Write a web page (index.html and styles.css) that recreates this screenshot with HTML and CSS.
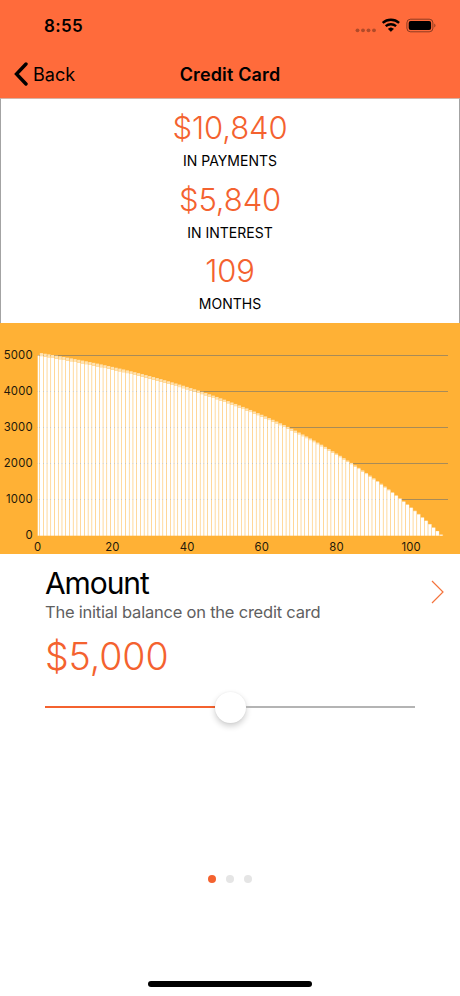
FILE: index.html
```html
<!DOCTYPE html>
<html lang="en">
<head>
    <meta charset="UTF-8">
    <title>Credit Card</title>
    <link rel="stylesheet" href="styles.css">
</head>
<body>
    <header class="header">
        <div class="status-bar">
            <span class="time">8:55</span>
            <svg class="status-icons" width="82" height="16" viewBox="0 0 82 16">
                <g class="signal">
                    <circle cx="3.5" cy="12.3" r="1.9"/>
                    <circle cx="9" cy="12.3" r="1.9"/>
                    <circle cx="14.5" cy="12.3" r="1.9"/>
                    <circle cx="20" cy="12.3" r="1.9"/>
                </g>
                <g class="wifi">
                    <path d="M28.7 4.9a12.4 12.4 0 0 1 16.4 0"/>
                    <path d="M31.7 8.2a8 8 0 0 1 10.4 0"/>
                    <path class="wifi-dot" d="M34.3 10.9a4.1 4.1 0 0 1 5.2 0L36.9 13.4z"/>
                </g>
                <rect class="battery-case" x="52.9" y="1.2" width="26" height="12.6" rx="3.6"/>
                <rect x="54.7" y="3" width="22.4" height="9" rx="2"/>
                <path class="battery-tip" d="M80 5.5q1.6.5 1.6 2t-1.6 2z"/>
            </svg>
        </div>
        <nav class="nav-bar">
            <a class="back">
                <svg width="14" height="24" viewBox="0 0 14 24"><path d="M12 2L2.5 12L12 22"/></svg>
                <span>Back</span>
            </a>
            <h1>Credit Card</h1>
        </nav>
    </header>

    <section class="summary">
        <div class="value">$10,840</div>
        <div class="label">IN PAYMENTS</div>
        <div class="value">$5,840</div>
        <div class="label">IN INTEREST</div>
        <div class="value">109</div>
        <div class="label">MONTHS</div>
    </section>

    <svg class="chart" id="chart" width="460" height="231" viewBox="0 0 460 231"></svg>

    <main class="card">
        <div class="card-head">
            <div>
                <h2>Amount</h2>
                <p>The initial balance on the credit card</p>
            </div>
            <svg class="next" width="14" height="24" viewBox="0 0 14 24"><path d="M1 1L12 12L1 23"/></svg>
        </div>
        <div class="amount">$5,000</div>
        <div class="slider">
            <div class="track filled"></div>
            <div class="thumb"></div>
            <div class="track"></div>
        </div>
    </main>

    <footer class="footer">
        <div class="dots">
            <span class="dot active"></span>
            <span class="dot"></span>
            <span class="dot"></span>
        </div>
        <div class="home-indicator"></div>
    </footer>

    <script src="chart.js"></script>
</body>
</html>
```
FILE: styles.css
```css
* {
    box-sizing: border-box;
}
body {
    margin: 0;
    height: 996px;
    display: flex;
    flex-direction: column;
    font-family: Inter, "Liberation Sans", sans-serif;
    background: #fff;
    color: #000;
    overflow: hidden;
}
h1, h2, p {
    margin: 0;
    font-weight: 400;
}
.header {
    height: 98px;
    background: #ff6b3b;
}
.status-bar {
    height: 50px;
    padding: 2px 24px 0 44px;
    display: flex;
    justify-content: space-between;
    align-items: center;
}
.time {
    font-size: 17px;
    font-weight: 600;
    line-height: 20px;
    letter-spacing: 0.3px;
}
.signal, .battery-tip {
    opacity: 0.3;
}
.wifi {
    fill: none;
    stroke: #000;
    stroke-width: 2.4;
}
.wifi-dot {
    fill: #000;
    stroke-width: 0.6;
}
.battery-case {
    fill: none;
    stroke: #000;
    stroke-opacity: 0.45;
}
.nav-bar {
    height: 48px;
    padding: 0 14px;
    display: grid;
    grid-template-columns: 1fr auto 1fr;
    align-items: center;
}
.back {
    display: flex;
    align-items: center;
    gap: 5px;
    font-size: 18px;
    letter-spacing: 0;
}
.back path {
    fill: none;
    stroke: #000;
    stroke-width: 3.4;
    stroke-linecap: round;
}
.nav-bar h1 {
    font-size: 18px;
    font-weight: 600;
    letter-spacing: 0.15px;
}
.summary {
    height: 225px;
    padding-top: 9px;
    border: 1px solid #a3a3a3;
    border-top-color: #d5b3a6;
    border-bottom: none;
    text-align: center;
}
.value {
    height: 41px;
    line-height: 40px;
    font-size: 31px;
    font-weight: 350;
    letter-spacing: -0.1px;
    color: #f4622f;
}
.label {
    height: 30.5px;
    line-height: 24px;
    font-size: 14px;
}
.chart {
    display: block;
    background: #ffb135;
    flex-shrink: 0;
}
.chart text {
    font-size: 11.3px;
    letter-spacing: 0.15px;
    fill: #21180a;
}
.chart line {
    stroke: #a88b58;
}
.bar-gap {
    fill: #fff;
    fill-opacity: 0.25;
}
.bar {
    fill: #fff;
}
.interest {
    fill: #ffe3b3;
}
.y-label {
    text-anchor: end;
}
.x-label {
    text-anchor: middle;
}
.card {
    padding: 11px 45px 0;
}
.card-head {
    display: flex;
    justify-content: space-between;
    margin-right: -30px;
}
.card h2 {
    font-size: 30px;
    line-height: 37px;
    letter-spacing: -1.1px;
}
.card p {
    font-size: 16.5px;
    line-height: 21px;
    letter-spacing: -0.22px;
    color: #606060;
}
.next {
    margin-top: 15px;
    fill: none;
    stroke: #f4733c;
    stroke-width: 1.2;
}
.amount {
    margin-top: 12px;
    font-size: 37.5px;
    font-weight: 350;
    line-height: 44px;
    letter-spacing: -0.1px;
    color: #f4622f;
}
.slider {
    height: 32px;
    margin-top: 12px;
    display: flex;
    align-items: center;
}
.track {
    flex: 1;
    height: 2px;
    background: #b4b4b4;
}
.track.filled {
    background: #f4622f;
}
.thumb {
    width: 31px;
    height: 31px;
    border-radius: 50%;
    background: #fff;
    box-shadow: 0 3px 6px rgba(0,0,0,0.2), 0 0 2px rgba(0,0,0,0.06);
}
.footer {
    margin-top: auto;
    padding-bottom: 9px;
    display: flex;
    flex-direction: column;
    align-items: center;
    gap: 98px;
}
.dots {
    display: flex;
    gap: 10px;
}
.dot {
    width: 8px;
    height: 8px;
    border-radius: 50%;
    background: #e5e5e5;
}
.dot.active {
    background: #f4622f;
}
.home-indicator {
    width: 164px;
    height: 6px;
    border-radius: 3px;
    background: #000;
}
```
FILE: chart.js
```js
const chart = document.getElementById('chart');
const left = 37.7;
const bottom = 212.7;
const stepX = 3.735;
const scaleY = 0.03604;

function add(name, attrs, text) {
    const el = document.createElementNS('http://www.w3.org/2000/svg', name);
    for (const key in attrs) {
        el.setAttribute(key, attrs[key]);
    }
    if (text !== undefined) {
        el.textContent = text;
    }
    chart.appendChild(el);
}

// grid and y axis
for (let v = 0; v <= 5000; v += 1000) {
    const y = bottom - v * scaleY;
    if (v > 0) {
        add('line', {x1: left, x2: 448, y1: Math.floor(y) + 0.5, y2: Math.floor(y) + 0.5});
    }
    add('text', {class: 'y-label', x: 32.7, y: y + 3.3}, v);
}

// x axis
for (let m = 0; m <= 100; m += 20) {
    add('text', {class: 'x-label', x: left + m * stepX, y: 228.4}, m);
}

// one bar per month, interest stacked on the balance
const rate = 0.1999 / 12;
const payment = 100;
let balance = 5000;
for (let m = 0; m < 109; m++) {
    const interest = m === 0 ? 0 : balance * rate;
    if (m > 0) {
        balance = Math.max(balance + interest - payment, 0);
    }
    const x = Math.max(left + (m - 0.43) * stepX, left);
    const width = left + (m + 0.43) * stepX - x;
    const h = Math.max(balance * scaleY, 1);
    const hi = interest * scaleY;
    add('rect', {class: 'bar', x: x, y: bottom - h, width: width, height: h});
    add('rect', {class: 'bar-gap', x: x + width, y: bottom - h, width: stepX * 0.14, height: h});
    add('rect', {class: 'interest', x: x, y: bottom - h - hi, width: width, height: hi});
}
```
